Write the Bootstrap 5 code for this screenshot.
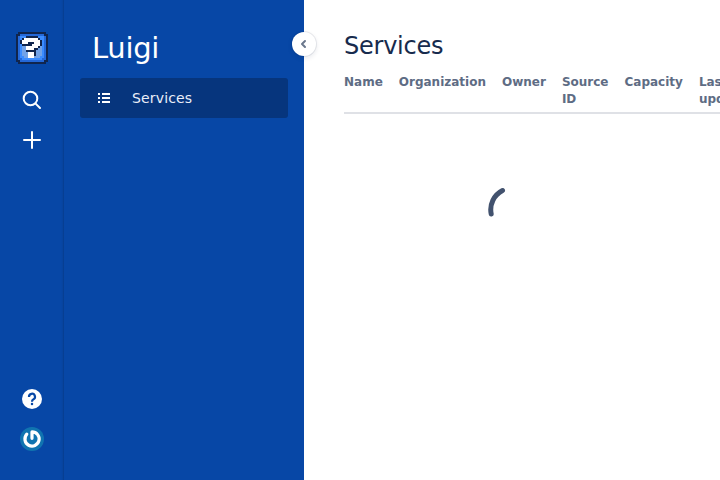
<!DOCTYPE html>
<html lang="en">
<head>
<meta charset="utf-8">
<meta name="viewport" content="width=device-width, initial-scale=1">
<title>Luigi - Services</title>
<link href="https://cdn.jsdelivr.net/npm/bootstrap@5.3.0/dist/css/bootstrap.min.css" rel="stylesheet">
<style>
body{font-family:"DejaVu Sans",sans-serif;font-size:14px;line-height:20px;color:#172b4d;background:#fff}
.global-nav{width:64px;padding:28px 0 21px;background:#0747a6}
.global-nav a{width:40px;height:40px;color:#fff}
.home-link{margin-bottom:12px}
.side-nav{width:240px;background:#0747a6;padding:28px 16px;color:#fff}
.side-nav::before{content:"";position:absolute;left:-3px;top:0;bottom:0;width:3px;background:linear-gradient(to left,rgba(0,0,0,.12) 0,rgba(0,0,0,.12) 1px,rgba(0,0,0,.06) 1px,rgba(0,0,0,0) 100%)}
.brand-title{font-size:29px;line-height:40px;letter-spacing:-.01em;padding-left:12px;margin:0 0 10px;font-weight:400}
.nav-entry{height:40px;background:#06357d;border-radius:3px;color:#e9eef8;padding-left:12px;letter-spacing:.16px}
.toggle-btn{left:228px;top:32px;width:24px;height:24px;background:#fff;color:#6b778c;box-shadow:0 0 0 1px rgba(9,30,66,.08),0 2px 4px 1px rgba(9,30,66,.08);z-index:2}
.page{padding:32px 0 0 40px}
.page h1{font-size:24px;line-height:28px;letter-spacing:-.01em;font-weight:400;margin:0 0 14px}
.head-row{width:520px;border-bottom:2px solid #dfe1e6;font-size:12px;line-height:17px;font-weight:700;color:#5e6c84;gap:16px;padding-bottom:4px}
.loader{width:336px;padding-top:71px}
</style>
<script src="https://cdn.jsdelivr.net/npm/bootstrap@5.3.0/dist/js/bootstrap.bundle.min.js"></script>
</head>
<body class="vh-100 overflow-hidden">
<div class="d-flex h-100">
  <nav class="global-nav d-flex flex-column align-items-center flex-shrink-0">
    <a href="#" class="home-link d-flex align-items-center justify-content-center" aria-label="Home">
      <svg width="32" height="32" viewBox="0 0 16 16" shape-rendering="crispEdges">
        <path fill="#10254d" d="M1 0h14v1h1v14h-1v1H1v-1H0V1h1z"/>
        <path fill="#2468d8" d="M2 1h12v1h1v12h-1v1H2v-1H1V2h1z"/>
        <path fill="#3b8cff" d="M2 2h12v11h-1v1H3v-1H2z"/>
        <path fill="#72a3e8" d="M3 4h10v8h-1v1H4v-1H3z"/>
        <path fill="#10254d" d="M5 2h6v1h1v1h1v3h-1v1h-1v1h-1v3H9v1H6v-3H5V7H3V6H2V4h1V3h2z"/>
        <path fill="#fff" d="M4 3h7v1h1v3h-1v1H9v1H5V7h3V6h1V5H6v1H3V4h1zM6 10h3v3H6z"/>
      </svg>
    </a>
    <a href="#" class="d-flex align-items-center justify-content-center" aria-label="Search">
      <svg width="24" height="24" viewBox="0 0 24 24" fill="none" stroke="currentColor" stroke-width="2" stroke-linecap="round"><circle cx="10.5" cy="10.5" r="6.8"/><path d="M15.6 15.6l4.4 4.4"/></svg>
    </a>
    <a href="#" class="d-flex align-items-center justify-content-center" aria-label="Create">
      <svg width="24" height="24" viewBox="0 0 24 24" fill="none" stroke="currentColor" stroke-width="2" stroke-linecap="round"><path d="M12 4v16M4 12h16"/></svg>
    </a>
    <a href="#" class="d-flex align-items-center justify-content-center mt-auto" aria-label="Help">
      <svg width="24" height="24" viewBox="0 0 24 24" fill="none"><circle cx="12" cy="12" r="10" fill="#fff"/><path d="M9 10a3 3 0 1 1 4.2 2.5c-.9.4-1.2.9-1.2 2.2" stroke="#0747a6" stroke-width="2.2"/><circle cx="12" cy="17" r="1.25" fill="#0747a6"/></svg>
    </a>
    <a href="#" class="d-flex align-items-center justify-content-center" aria-label="Account">
      <svg width="24" height="24" viewBox="0 0 24 24" fill="none"><circle cx="12" cy="12" r="12" fill="#1074b0"/><path d="M12 5v6.3M12 4.9a7.1 7.1 0 1 1-5.2 2.3" stroke="#fff" stroke-width="3.2" stroke-linecap="round"/></svg>
    </a>
  </nav>
  <aside class="side-nav position-relative flex-shrink-0">
    <h2 class="brand-title">Luigi</h2>
    <a href="#" class="nav-entry d-flex align-items-center text-decoration-none">
      <svg width="24" height="24" viewBox="0 0 24 24" fill="#fff"><path d="M6 7h2v2H6zM6 11h2v2H6zM6 15h2v2H6zM10 7h8v2h-8zM10 11h8v2h-8zM10 15h8v2h-8z"/></svg>
      <span class="ms-3">Services</span>
    </a>
    <button type="button" class="toggle-btn position-absolute rounded-circle border-0 p-0 d-flex align-items-center justify-content-center" aria-label="Collapse">
      <svg width="24" height="24" viewBox="0 0 24 24" fill="none" stroke="currentColor" stroke-width="2" stroke-linecap="round" stroke-linejoin="round"><path d="M13 9l-3 3 3 3"/></svg>
    </button>
  </aside>
  <main class="page flex-grow-1 overflow-hidden">
    <h1>Services</h1>
    <div class="head-row d-flex">
      <div>Name</div><div>Organization</div><div>Owner</div><div>Source<br>ID</div><div>Capacity</div><div>Last<br>updated</div>
    </div>
    <div class="loader d-flex justify-content-center">
      <svg width="48" height="48" viewBox="0 0 48 48" fill="none" stroke="#42526e" stroke-width="5" stroke-linecap="round"><path d="M3.2 29A21.5 21.5 0 0 1 14.5 5.5"/></svg>
    </div>
  </main>
</div>
</body>
</html>
